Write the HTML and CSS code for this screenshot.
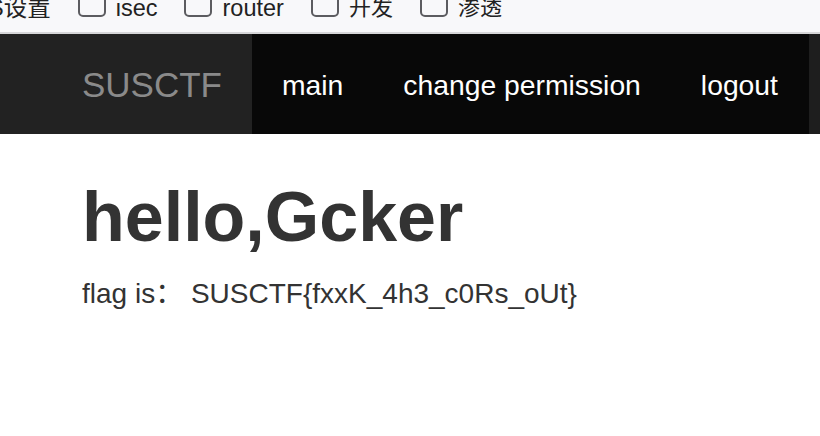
FILE: index.html
```html
<!DOCTYPE html>
<html lang="zh">
<head>
<meta charset="utf-8">
<title>SUSCTF</title>
<link rel="stylesheet" href="styles.css">
</head>
<body>
<div class="bookmarks">
  <div class="bm-row">
    <span class="bm-text bm-first">S设置</span>
    <span class="bm-item"><span class="folder"></span><span class="bm-text">isec</span></span>
    <span class="bm-item"><span class="folder"></span><span class="bm-text">router</span></span>
    <span class="bm-item"><span class="folder"></span><span class="bm-text cjk">开发</span></span>
    <span class="bm-item"><span class="folder"></span><span class="bm-text cjk">渗透</span></span>
  </div>
</div>
<nav class="navbar">
  <a class="brand" href="#">SUSCTF</a>
  <ul class="nav-links">
    <li><a href="#">main</a></li>
    <li><a href="#">change permission</a></li>
    <li><a href="#">logout</a></li>
  </ul>
</nav>
<main class="content">
  <h1 class="title">hello,Gcker</h1>
  <p class="flag">flag is： SUSCTF{fxxK_4h3_c0Rs_oUt}</p>
</main>
</body>
</html>
```

FILE: styles.css
```css
html, body {
  margin: 0;
  padding: 0;
  background: #ffffff;
  font-family: "Liberation Sans", Arial, "Noto Sans CJK SC", sans-serif;
}

.bookmarks {
  height: 32px;
  background: #f8f8fa;
  border-bottom: 2px solid #d6d6d8;
  overflow: hidden;
}

.bm-row {
  display: flex;
  align-items: center;
  margin-top: -10px;
  height: 36px;
  white-space: nowrap;
}

.bm-text {
  font-family: "Liberation Sans", "Noto Sans CJK SC", sans-serif;
  font-size: 23.5px;
  color: #222;
  line-height: 36px;
}

.bm-text.cjk {
  font-size: 22px;
}

.bm-first {
  margin-left: -12px;
}

.bm-item {
  display: flex;
  align-items: center;
  margin-left: 27px;
}

.folder {
  display: inline-block;
  width: 24px;
  height: 26px;
  margin-top: -13px;
  border: 2px solid #5c5c60;
  border-radius: 5px;
  margin-right: 10px;
}

.navbar {
  display: flex;
  height: 100px;
  background: #1e1e1e;
}

.brand {
  display: flex;
  align-items: center;
  box-sizing: border-box;
  width: 252px;
  padding-left: 82px;
  padding-top: 2px;
  background: #222222;
  color: #8a8a8a;
  font-size: 35px;
  text-decoration: none;
}

.nav-links {
  display: flex;
  margin: 0;
  padding: 0;
  list-style: none;
  background: #080808;
  width: 557px;
}

.nav-links li {
  display: flex;
  align-items: center;
  padding-top: 3px;
}

.nav-links a {
  display: block;
  padding: 0 30px;
  color: #ffffff;
  font-size: 28.3px;
  text-decoration: none;
}

.content {
  padding: 0 82px;
}

.title {
  margin: 45px 0 0;
  font-size: 70px;
  font-weight: bold;
  line-height: 77px;
  color: #333333;
}

.flag {
  margin: 15px 0 0;
  font-size: 28px;
  color: #333333;
}
```
